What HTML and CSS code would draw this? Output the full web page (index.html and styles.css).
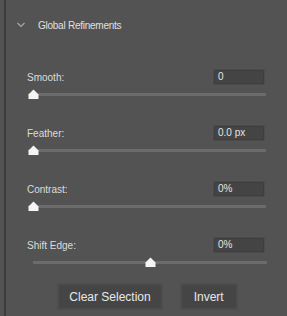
FILE: index.html
```html
<!DOCTYPE html>
<html>
<head>
<meta charset="utf-8">
<link rel="stylesheet" href="styles.css">
</head>
<body>
<div class="panel">
  <div class="header">
    <svg class="chev" width="8" height="6" viewBox="0 0 8 6"><path d="M0.5 1 L4 4.5 L7.5 1" fill="none" stroke="#a8a8a8" stroke-width="1.2"/></svg>
    <span class="title">Global Refinements</span>
  </div>

  <div class="group">
    <div class="labelrow"><span class="label">Smooth:</span><span class="field">0</span></div>
    <div class="slider"><div class="track"></div><svg class="thumb" style="left:0px" width="11" height="10" viewBox="0 0 11 10"><path d="M5.5 0.5 L10.5 5.5 V10 H0.5 V5.5 Z" fill="#f4f4f4"/></svg></div>
  </div>

  <div class="group">
    <div class="labelrow"><span class="label">Feather:</span><span class="field">0.0 px</span></div>
    <div class="slider"><div class="track"></div><svg class="thumb" style="left:0px" width="11" height="10" viewBox="0 0 11 10"><path d="M5.5 0.5 L10.5 5.5 V10 H0.5 V5.5 Z" fill="#f4f4f4"/></svg></div>
  </div>

  <div class="group">
    <div class="labelrow"><span class="label">Contrast:</span><span class="field">0%</span></div>
    <div class="slider"><div class="track"></div><svg class="thumb" style="left:0px" width="11" height="10" viewBox="0 0 11 10"><path d="M5.5 0.5 L10.5 5.5 V10 H0.5 V5.5 Z" fill="#f4f4f4"/></svg></div>
  </div>

  <div class="group">
    <div class="labelrow"><span class="label">Shift Edge:</span><span class="field">0%</span></div>
    <div class="slider shift"><div class="track"></div><svg class="thumb" style="left:112px" width="11" height="10" viewBox="0 0 11 10"><path d="M5.5 0.5 L10.5 5.5 V10 H0.5 V5.5 Z" fill="#f4f4f4"/></svg></div>
  </div>

  <div class="buttons">
    <button class="btn">Clear Selection</button>
    <button class="btn invert">Invert</button>
  </div>
</div>
</body>
</html>
```
FILE: styles.css
```css
html, body {
  margin: 0;
  padding: 0;
  background: #535353;
  width: 287px;
  height: 316px;
  overflow: hidden;
  font-family: "Liberation Sans", Arial, sans-serif;
}
.panel {
  margin-left: 4px;
  border-left: 2px solid #3b3b3b;
  height: 316px;
  box-sizing: border-box;
  padding: 17px 23px 0 21px;
  display: flex;
  flex-direction: column;
}
.header {
  display: flex;
  align-items: center;
  height: 16px;
  margin-left: -10px;
}
.chev {
  display: block;
}
.title {
  margin-left: 13px;
  font-size: 10px;
  color: #e0e0e0;
  letter-spacing: -0.25px;
}
.group {
  display: flex;
  flex-direction: column;
  gap: 4px;
}
.header + .group {
  margin-top: 36px;
}
.group + .group {
  margin-top: 26px;
}
.labelrow {
  display: flex;
  align-items: center;
  justify-content: space-between;
  height: 16px;
}
.label {
  font-size: 10px;
  color: #dcdcdc;
}
.field {
  box-sizing: border-box;
  width: 50px;
  height: 14px;
  background: #444444;
  border: 1px solid #3e3e3e;
  box-shadow: 0 0 0 1px #4c4c4c;
  color: #e4e4e4;
  font-size: 10px;
  line-height: 12px;
  padding-left: 3px;
}
.slider {
  position: relative;
  height: 10px;
  margin-left: 1px;
  margin-right: -2px;
}
.slider.shift {
  margin-left: 6px;
  margin-right: -3px;
}
.track {
  position: absolute;
  left: 0;
  right: 0;
  top: 4px;
  height: 3px;
  background: #6c6c6c;
  border-radius: 1px;
}
.thumb {
  position: absolute;
  top: 0;
  display: block;
}
.buttons {
  margin-top: 18px;
  display: flex;
  justify-content: center;
  gap: 21px;
  padding-left: 4px;
}
.btn {
  height: 23px;
  background: #454545;
  border: none;
  box-shadow: 0 0 0 2px #4d4d4d;
  color: #e8e8e8;
  font-family: "Liberation Sans", Arial, sans-serif;
  font-size: 12px;
  padding: 0 10px;
  margin: 0;
}
.btn.invert {
  padding: 0 12px;
}
```
